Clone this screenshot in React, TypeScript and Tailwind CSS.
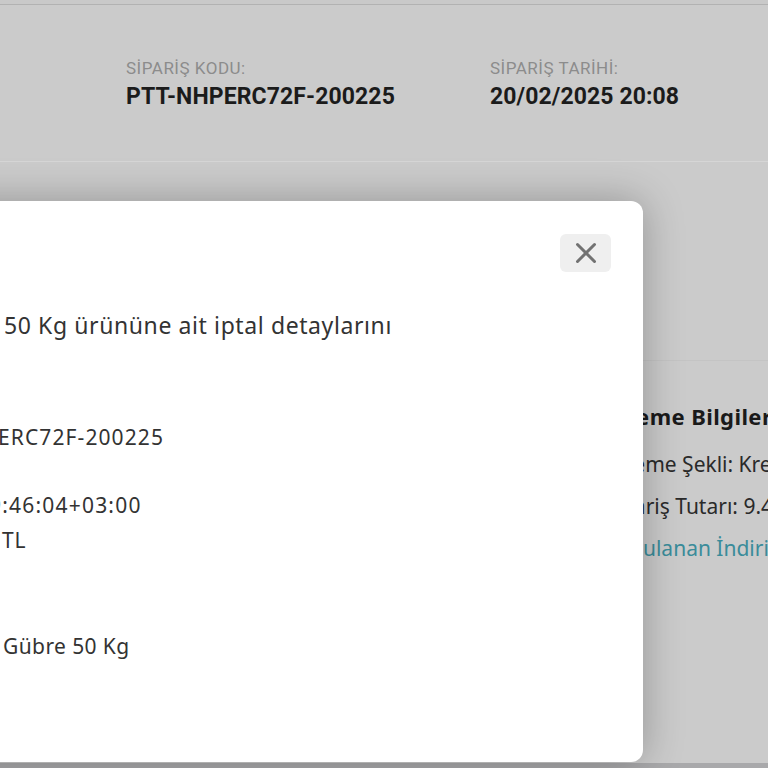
import { X } from "lucide-react";

const FONT = { fontFamily: '"Noto Sans", "Open Sans", sans-serif' };
const HEAD_FONT = { fontFamily: 'Roboto, "Noto Sans", sans-serif' };

export default function App() {
  return (
    <div
      className="relative w-[768px] h-[768px] overflow-hidden bg-[#cbcbcb]"
      style={FONT}
    >
      {/* page under the overlay */}
      <div className="h-[4px] bg-[#c9c9c9] border-b border-[#b2b2b2] box-content" />
      <div className="h-[157px] border-b border-[#d6d6d6] flex pl-[126px] pt-[52px] gap-[95px]" style={HEAD_FONT}>
        <div className="flex flex-col">
          <span className="text-[17px] leading-[22px] text-[#8c8c8c] tracking-[0.5px]">SİPARİŞ KODU:</span>
          <span className="text-[23px] leading-[36px] font-bold text-[#1b1b1b] tracking-[0.1px]">
            PTT-NHPERC72F-200225
          </span>
        </div>
        <div className="flex flex-col">
          <span className="text-[17px] leading-[22px] text-[#8c8c8c] tracking-[0.5px]">SİPARİŞ TARİHİ:</span>
          <span className="text-[23px] leading-[36px] font-bold text-[#1b1b1b] tracking-[0.1px]">
            20/02/2025 20:08
          </span>
        </div>
      </div>
      <div className="flex">
        <div className="w-[604px] shrink-0" />
        <div className="flex-1 border-t border-[#c4c4c4] mt-[198px] pt-[43px] flex flex-col gap-[19px] whitespace-nowrap">
          <div className="text-[22px] leading-[24px] font-bold text-[#1a1a1a] tracking-[0.4px]">Ödeme Bilgileri</div>
          <div className="text-[21px] leading-[23px] text-[#2a2a2a] mt-[6px]">Ödeme Şekli: Kredi Kartı</div>
          <div className="text-[21px] leading-[23px] text-[#2a2a2a]">Sipariş Tutarı: 9.450,00 TL</div>
          <div className="text-[21px] leading-[23px] text-[#3a8c9a]">Uygulanan İndirim</div>
        </div>
      </div>
      <div className="absolute left-0 right-0 bottom-0 h-[5px] bg-[#a9a9ab]" />

      {/* cancellation modal */}
      <div className="absolute left-[-400px] top-[201px] w-[1043px] h-[561px] rounded-xl bg-white shadow-[0_0_40px_rgba(0,0,0,0.28)]">
        <button className="absolute right-[32px] top-[33px] w-[51px] h-[38px] rounded-md bg-[#efefef] flex items-center justify-center">
          <X size={34} strokeWidth={2.1} color="#727272" />
        </button>
        <div className="pl-[404px] pt-[109px] text-[#333333] whitespace-nowrap">
          <div className="text-[23px] leading-[30px] tracking-[0.6px]">50 Kg ürününe ait iptal detaylarını</div>
          <div className="text-[21px] leading-[34px] mt-[80px] ml-[-6px] tracking-[1.1px]">ERC72F-200225</div>
          <div className="text-[21px] leading-[34px] mt-[34px] ml-[-15px] tracking-[1.2px]">9:46:04+03:00</div>
          <div className="text-[21px] leading-[34px] mt-[1px] ml-[-2px] tracking-[0.7px]">TL</div>
          <div className="text-[21px] leading-[34px] mt-[72px] ml-[-1px] tracking-[0.4px]">Gübre 50 Kg</div>
        </div>
      </div>
    </div>
  );
}
